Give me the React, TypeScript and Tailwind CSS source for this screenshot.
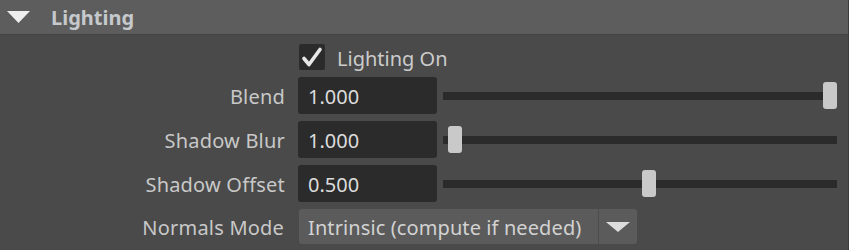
const font = { fontFamily: '"Noto Sans", "Open Sans", sans-serif' };

interface SliderRowProps {
  label: string;
  value: string;
  frac: number;
}

function SliderRow({ label, value, frac }: SliderRowProps) {
  return (
    <div className="flex items-center h-[37px]">
      <div className="w-[285px] text-right text-[20px] text-[#c8c8c8] leading-none pt-[3px] tracking-[0.2px]">{label}</div>
      <div className="ml-[13px] w-[139px] h-[37px] rounded-[3px] bg-[#2b2b2b] flex items-center pl-[10px] pt-[2px] text-[20px] text-[#dcdcdc]">
        {value}
      </div>
      <div className="relative flex-1 ml-[6px] mr-[11px] h-[27px] flex items-center">
        <div className="w-full h-[8px] bg-[#2b2b2b]"></div>
        {/* thumb */}
        <div
          className="absolute top-0 w-[14px] h-[27px] rounded-[3px] bg-[#c9c9c9]"
          style={{ left: `calc(${frac} * (100% - 14px))` }}
        ></div>
      </div>
    </div>
  );
}

export default function App() {
  return (
    <div className="w-[849px] h-[250px] bg-[#4a4a4a] overflow-hidden border-r border-[#3c3c3c]" style={font}>
      {/* Section header */}
      <div className="h-[35px] bg-[#5d5d5d] flex items-center border-b border-[#444444]">
        <svg className="ml-[7px]" width="23" height="12" viewBox="0 0 23 12">
          <polygon points="0,0 23,0 11.5,12" fill="#eeeeee" />
        </svg>
        <span className="ml-[21px] text-[20px] font-bold text-[#c6c9cc] leading-none pt-[2px]">Lighting</span>
      </div>

      <div className="pt-[9px]">
        {/* Checkbox */}
        <div className="flex items-center h-[26px] pl-[299px]">
          <div className="w-[26px] h-[26px] rounded-[2px] bg-[#2b2b2b] flex items-center justify-center">
            <svg width="26" height="26" viewBox="0 0 26 26">
              <path d="M5 14.5 L10 20.5 L21 5.5" fill="none" stroke="#e8e8e8" strokeWidth="3.6" strokeLinecap="round" strokeLinejoin="round" />
            </svg>
          </div>
          <span className="ml-[12px] text-[20px] text-[#cccccc] leading-none pt-[3px]">Lighting On</span>
        </div>

        <div className="mt-[7px] flex flex-col gap-[7px]">
          <SliderRow label="Blend" value="1.000" frac={1} />
          <SliderRow label="Shadow Blur" value="1.000" frac={0.013} />
          <SliderRow label="Shadow Offset" value="0.500" frac={0.524} />
        </div>

        {/* Dropdown */}
        <div className="mt-[7px] flex items-center h-[35px]">
          <div className="w-[284px] text-right text-[20px] text-[#c8c8c8] leading-none pt-[3px] tracking-[0.2px]">Normals Mode</div>
          <div className="ml-[15px] w-[338px] h-[35px] rounded-[3px] bg-[#5b5b5b] flex items-center">
            <span className="flex-1 pl-[9px] pt-[2px] text-[20px] text-[#d2d2d2] leading-none tracking-[0.1px]">Intrinsic (compute if needed)</span>
            <div className="w-[39px] h-full border-l border-[#4c4c4c] flex items-center justify-center">
              <svg width="24" height="10" viewBox="0 0 24 10">
                <polygon points="0,0 24,0 12,10" fill="#dddddd" />
              </svg>
            </div>
          </div>
        </div>
      </div>
    </div>
  );
}
